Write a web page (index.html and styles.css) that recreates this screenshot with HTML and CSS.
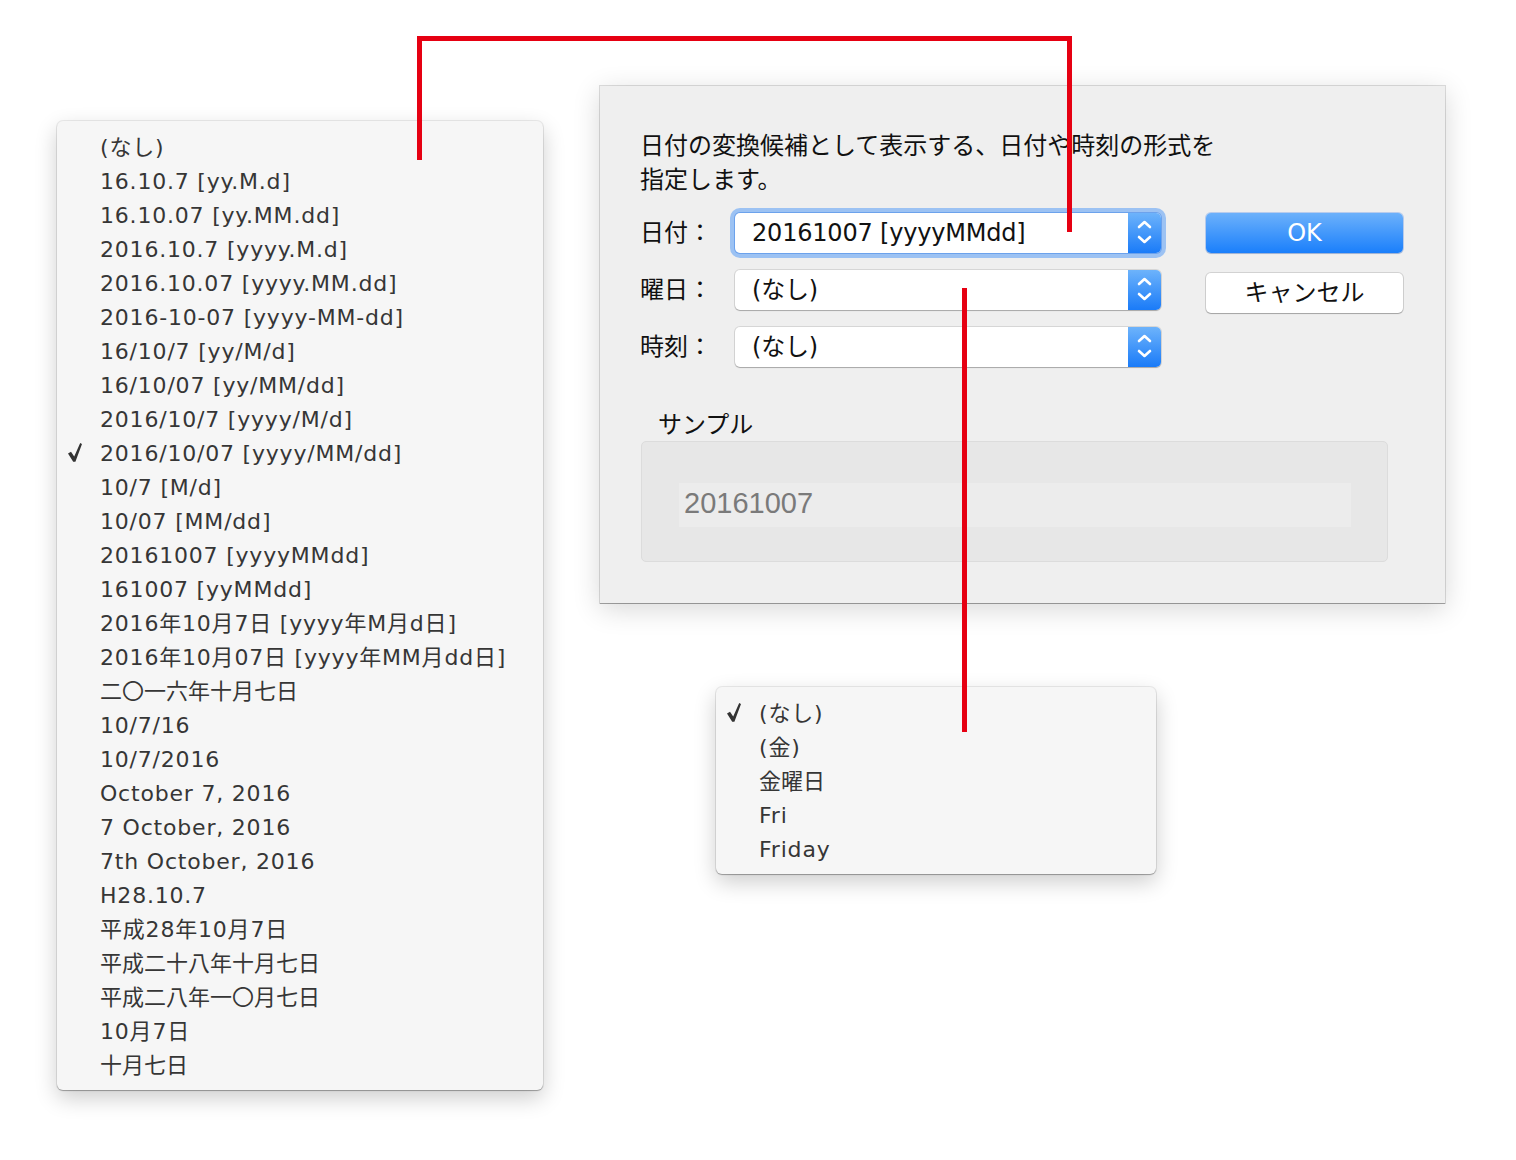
FILE: index.html
```html
<!DOCTYPE html>
<html lang="ja">
<head>
<meta charset="utf-8">
<title>日付の形式</title>
<link rel="stylesheet" href="styles.css">
</head>
<body>
<div class="canvas">

  <div class="menu menu-date">
    <div class="menu-item">(なし)</div>
    <div class="menu-item">16.10.7 [yy.M.d]</div>
    <div class="menu-item">16.10.07 [yy.MM.dd]</div>
    <div class="menu-item">2016.10.7 [yyyy.M.d]</div>
    <div class="menu-item">2016.10.07 [yyyy.MM.dd]</div>
    <div class="menu-item">2016-10-07 [yyyy-MM-dd]</div>
    <div class="menu-item">16/10/7 [yy/M/d]</div>
    <div class="menu-item">16/10/07 [yy/MM/dd]</div>
    <div class="menu-item">2016/10/7 [yyyy/M/d]</div>
    <div class="menu-item"><svg class="check" viewBox="0 0 14 19"><polygon points="0,10.5 3,8.8 6.2,13.6 12.2,0 14,1 7.4,18.8 5.2,18.8"/></svg>2016/10/07 [yyyy/MM/dd]</div>
    <div class="menu-item">10/7 [M/d]</div>
    <div class="menu-item">10/07 [MM/dd]</div>
    <div class="menu-item">20161007 [yyyyMMdd]</div>
    <div class="menu-item">161007 [yyMMdd]</div>
    <div class="menu-item">2016年10月7日 [yyyy年M月d日]</div>
    <div class="menu-item">2016年10月07日 [yyyy年MM月dd日]</div>
    <div class="menu-item kanji">二〇一六年十月七日</div>
    <div class="menu-item">10/7/16</div>
    <div class="menu-item">10/7/2016</div>
    <div class="menu-item">October 7, 2016</div>
    <div class="menu-item">7 October, 2016</div>
    <div class="menu-item">7th October, 2016</div>
    <div class="menu-item">H28.10.7</div>
    <div class="menu-item">平成28年10月7日</div>
    <div class="menu-item kanji">平成二十八年十月七日</div>
    <div class="menu-item kanji">平成二八年一〇月七日</div>
    <div class="menu-item">10月7日</div>
    <div class="menu-item kanji">十月七日</div>
  </div>

  <div class="dialog">
    <p class="desc">日付の変換候補として表示する、日付や時刻の形式を<br>指定します。</p>
    <div class="form">
      <div class="fields">
        <div class="label">日付：</div>
        <div class="popup focus">
          <span class="popup-text">20161007 [yyyyMMdd]</span>
          <span class="stepper"><svg viewBox="0 0 33 40"><path d="M11 14 L16.5 9 L22 14 M11 24 L16.5 29 L22 24"/></svg></span>
        </div>
        <div class="label">曜日：</div>
        <div class="popup">
          <span class="popup-text">(なし)</span>
          <span class="stepper"><svg viewBox="0 0 33 40"><path d="M11 14 L16.5 9 L22 14 M11 24 L16.5 29 L22 24"/></svg></span>
        </div>
        <div class="label">時刻：</div>
        <div class="popup">
          <span class="popup-text">(なし)</span>
          <span class="stepper"><svg viewBox="0 0 33 40"><path d="M11 14 L16.5 9 L22 14 M11 24 L16.5 29 L22 24"/></svg></span>
        </div>
      </div>
      <div class="buttons">
        <div class="btn btn-ok">OK</div>
        <div class="btn btn-cancel">キャンセル</div>
      </div>
    </div>
    <div class="sample-label">サンプル</div>
    <div class="sample-box">
      <div class="sample-field">20161007</div>
    </div>
  </div>

  <div class="menu menu-week">
    <div class="menu-item"><svg class="check" viewBox="0 0 14 19"><polygon points="0,10.5 3,8.8 6.2,13.6 12.2,0 14,1 7.4,18.8 5.2,18.8"/></svg>(なし)</div>
    <div class="menu-item">(金)</div>
    <div class="menu-item kanji">金曜日</div>
    <div class="menu-item">Fri</div>
    <div class="menu-item">Friday</div>
  </div>

  <div class="line line-a"></div>
  <div class="line line-top"></div>
  <div class="line line-b"></div>
  <div class="line line-c"></div>
</div>
</body>
</html>
```

FILE: styles.css
```css
html, body {
  margin: 0;
  padding: 0;
  background: #ffffff;
}

.canvas {
  position: relative;
  width: 1516px;
  height: 1160px;
  overflow: hidden;
  font-family: "DejaVu Sans", "Noto Sans CJK JP", sans-serif;
}

/* ---------- popup menus ---------- */
.menu {
  position: absolute;
  box-sizing: border-box;
  background: #f6f6f6;
  border-radius: 6px;
  padding: 10px 0 7px;
  font-size: 22px;
  color: #363636;
  box-shadow: 0 0 0 1px rgba(0, 0, 0, 0.07),
              0 1px 1px rgba(0, 0, 0, 0.28),
              0 8px 22px rgba(0, 0, 0, 0.2);
}

.menu-date {
  left: 57px;
  top: 121px;
  width: 486px;
}

.menu-week {
  left: 716px;
  top: 687px;
  width: 440px;
}

.menu-item {
  position: relative;
  height: 34px;
  line-height: 34px;
  padding-left: 43px;
  white-space: nowrap;
  letter-spacing: 0.8px;
}

.menu-item.kanji {
  letter-spacing: 0;
}

.check {
  position: absolute;
  left: 11px;
  top: 6px;
  width: 14px;
  height: 19px;
  fill: #333333;
}

/* ---------- dialog ---------- */
.dialog {
  position: absolute;
  left: 600px;
  top: 86px;
  width: 845px;
  height: 517px;
  box-sizing: border-box;
  padding: 43px 42px 0 40px;
  background: #efefef;
  color: #111111;
  font-size: 24px;
  box-shadow: 0 0 0 1px rgba(0, 0, 0, 0.13),
              0 1px 0 rgba(0, 0, 0, 0.25),
              0 6px 26px rgba(0, 0, 0, 0.16);
}

.desc {
  margin: 0;
  line-height: 34px;
  white-space: nowrap;
}

.form {
  display: flex;
  margin-top: 16px;
}

.fields {
  display: grid;
  grid-template-columns: 95px 426px;
  grid-auto-rows: 40px;
  row-gap: 17px;
  align-items: center;
}

.label {
  line-height: 34px;
  white-space: nowrap;
}

.popup {
  position: relative;
  height: 40px;
  box-sizing: border-box;
  display: flex;
  align-items: center;
  padding-left: 17px;
  background: #ffffff;
  border-radius: 5px;
  box-shadow: 0 0 0 1px rgba(0, 0, 0, 0.1),
              0 1px 1px rgba(0, 0, 0, 0.22);
}

.popup.focus {
  box-shadow: 0 0 0 1px rgba(60, 130, 230, 0.5),
              0 0 0 5px #9cc2f3;
}

.popup-text {
  white-space: nowrap;
  line-height: 34px;
  letter-spacing: -0.2px;
}

.stepper {
  position: absolute;
  right: 0;
  top: 0;
  width: 33px;
  height: 40px;
  border-radius: 0 5px 5px 0;
  background: linear-gradient(#6db3fb, #1a7bf8);
}

.stepper svg {
  display: block;
  width: 33px;
  height: 40px;
}

.stepper path {
  fill: none;
  stroke: #ffffff;
  stroke-width: 2.6;
  stroke-linecap: round;
  stroke-linejoin: round;
}

.buttons {
  display: flex;
  flex-direction: column;
  gap: 20px;
  width: 197px;
  margin-left: 45px;
}

.btn {
  height: 40px;
  box-sizing: border-box;
  border-radius: 5px;
  text-align: center;
  line-height: 40px;
  white-space: nowrap;
}

.btn-ok {
  color: #ffffff;
  background: linear-gradient(#6cb1fb, #1a7ffb);
  box-shadow: 0 0 0 1px rgba(20, 100, 230, 0.25),
              0 1px 1px rgba(0, 0, 0, 0.15);
}

.btn-cancel {
  color: #111111;
  background: #ffffff;
  box-shadow: 0 0 0 1px rgba(0, 0, 0, 0.12),
              0 1px 1px rgba(0, 0, 0, 0.22);
}

.sample-label {
  margin: 41px 0 0 18px;
  line-height: 34px;
}

.sample-box {
  margin: -1px 0 0 1px;
  width: 747px;
  height: 121px;
  box-sizing: border-box;
  padding: 41px 36px 0 37px;
  background: #e7e7e7;
  border: 1px solid #dcdcdc;
  border-radius: 5px;
}

.sample-field {
  height: 44px;
  box-sizing: border-box;
  padding-left: 5px;
  background: #ececec;
  font-family: "Liberation Sans", Arial, sans-serif;
  font-size: 29px;
  line-height: 40px;
  color: #7a7a7a;
}

/* ---------- red annotation lines ---------- */
.line {
  position: absolute;
  background: #e60012;
  z-index: 10;
}

.line-a {
  left: 417px;
  top: 36px;
  width: 5px;
  height: 124px;
}

.line-top {
  left: 417px;
  top: 36px;
  width: 655px;
  height: 5px;
}

.line-b {
  left: 1067px;
  top: 36px;
  width: 5px;
  height: 196px;
}

.line-c {
  left: 962px;
  top: 288px;
  width: 5px;
  height: 444px;
}
```
